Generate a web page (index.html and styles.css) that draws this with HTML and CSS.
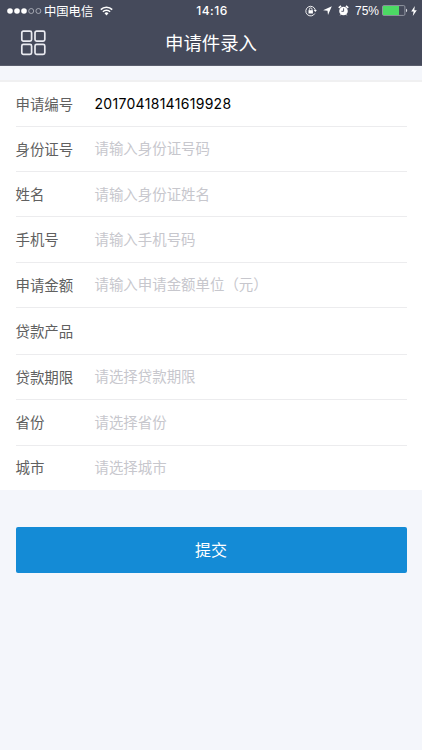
FILE: index.html
```
<!DOCTYPE html>
<html lang="zh-CN">
<head>
<meta charset="utf-8">
<title>申请件录入</title>
<link rel="stylesheet" href="styles.css">
</head>
<body>
<header class="header">
  <div class="status">
    <div class="status-left">
      <svg class="signal" width="36" height="8" viewBox="0 0 36 8"><g fill="#fff"><circle cx="3" cy="4" r="2.8"/><circle cx="10" cy="4" r="2.8"/><circle cx="17" cy="4" r="2.8"/></g><g fill="none" stroke="#c9cbd2" stroke-width=".7"><circle cx="24.2" cy="4" r="2.5"/><circle cx="31.4" cy="4" r="2.5"/></g></svg>
      <span class="carrier">中国电信</span>
      <svg class="wifi" width="13" height="10" viewBox="0 0 13 10"><g fill="none" stroke="#fff" stroke-width="1.6"><path d="M.8 3.6a8 8 0 0 1 11.4 0"/><path d="M2.9 5.8a5.1 5.1 0 0 1 7.2 0"/></g><path fill="#fff" d="M6.5 9.4 4.5 7.3a2.8 2.8 0 0 1 4 0z"/></svg>
    </div>
    <time class="clock">14:16</time>
    <div class="status-right">
      <svg width="12" height="12" viewBox="0 0 12 12"><path d="M9.8 8.5A4.8 4.8 0 1 1 10.3 5" fill="none" stroke="#fff" stroke-width=".9"/><path d="M8.7 5.1h3.1l-1.5 2z" fill="#fff"/><rect x="3.5" y="5.2" width="4.4" height="3.3" fill="#fff"/><path d="M4.4 5.5V4.2a1.3 1.3 0 0 1 2.6 0v1.3" fill="none" stroke="#fff" stroke-width=".8"/></svg>
      <svg class="locate" width="9" height="9" viewBox="0 0 9 9"><path d="M8.8.2 5 8.9 4.5 4.7.1 4.2z" fill="#fff"/></svg>
      <svg class="alarm" width="11" height="11" viewBox="0 0 11 11"><circle cx="5.5" cy="6" r="4.3" fill="#fff"/><path d="M.8 2.9 3 .9M10.2 2.9 8 .9" stroke="#fff" stroke-width="1.6"/><path d="m2.3 10.3 1-1.2M8.7 10.3l-1-1.2" stroke="#fff"/><path d="M5.6 3.3v3H3.4" fill="none" stroke="#454a5b" stroke-width=".9"/></svg>
      <span class="percent">75%</span>
      <svg class="battery" width="26" height="11" viewBox="0 0 26 11"><rect x=".5" y=".6" width="22.4" height="9.8" rx="1.2" fill="none" stroke="#a5a8b3" stroke-width=".8"/><rect x="1" y="1" width="16" height="9" fill="#4cd964"/><path d="M24 3.8c1.6.3 1.6 3.1 0 3.4z" fill="#d9dbe0"/></svg>
      <svg class="bolt" width="6" height="10" viewBox="0 0 6 10"><path d="M3.8 0 .2 5.6h2.4L1.8 10l4-5.8H3.3z" fill="#fff"/></svg>
    </div>
  </div>
  <div class="navbar">
    <svg class="menu" width="26" height="26" viewBox="0 0 26 26"><g fill="none" stroke="#e9eaf0" stroke-width="1.7"><rect x="1.8" y="1.2" width="9.8" height="10" rx="1.6"/><rect x="15" y="1.2" width="9.8" height="10" rx="1.6"/><rect x="1.8" y="14.4" width="9.8" height="10" rx="1.6"/><rect x="15" y="14.4" width="9.8" height="10" rx="1.6"/></g></svg>
    <h1 class="title">申请件录入</h1>
  </div>
</header>
<main>
  <div class="form">
    <div class="row"><span class="label">申请编号</span><span class="value">20170418141619928</span></div>
    <div class="row"><span class="label">身份证号</span><span class="hint">请输入身份证号码</span></div>
    <div class="row row-name"><span class="label">姓名</span><span class="hint">请输入身份证姓名</span></div>
    <div class="row row-mid"><span class="label">手机号</span><span class="hint">请输入手机号码</span></div>
    <div class="row"><span class="label">申请金额</span><span class="hint">请输入申请金额单位（元）</span></div>
    <div class="row row-tall"><span class="label">贷款产品</span></div>
    <div class="row"><span class="label">贷款期限</span><span class="hint">请选择贷款期限</span></div>
    <div class="row row-mid"><span class="label">省份</span><span class="hint">请选择省份</span></div>
    <div class="row row-last"><span class="label">城市</span><span class="hint">请选择城市</span></div>
  </div>
  <button class="submit" type="button">提交</button>
</main>
</body>
</html>
```
FILE: styles.css
```
* { box-sizing: border-box; }
body {
  margin: 0;
  min-height: 750px;
  background: #f4f6fb;
  font-family: Inter, "Noto Sans CJK SC", sans-serif;
}
svg { display: block; flex: none; }
.header {
  height: 66px;
  background: #454a5b;
  border-bottom: 1px solid #5a5e6d;
  color: #fff;
}
.status {
  display: grid;
  grid-template-columns: 1fr auto 1fr;
  height: 21px;
  align-items: center;
  padding: 0 5px 0 7px;
}
.status-left, .status-right { display: flex; align-items: center; height: 21px; }
.status-right { justify-content: flex-end; }
.carrier { margin-left: 1px; font-size: 12.3px; line-height: 20px; padding-top: 2px; }
.wifi { margin-left: 7px; }
.clock { font-size: 12px; font-weight: 500; line-height: 21px; letter-spacing: .5px; }
.locate { margin-left: 6px; }
.alarm { margin-left: 6px; }
.percent { margin-left: 6px; padding-top: 1px; font-family: "Liberation Sans", sans-serif; font-size: 12px; line-height: 21px; }
.battery { margin-left: 3px; }
.bolt { margin-left: 3px; }
.navbar {
  display: grid;
  grid-template-columns: 60px 1fr 60px;
  align-items: center;
  height: 44px;
}
.menu { margin-left: 20px; }
.title {
  margin: 0;
  font-size: 18.4px;
  font-weight: 400;
  line-height: 44px;
  text-align: center;
}
.form {
  margin-top: 14px;
  padding-left: 15.5px;
  padding-right: 15.5px;
  background: #fff;
  border-top: 2px solid #f0f0f1;
}
.row {
  display: flex;
  align-items: center;
  height: 45px;
  padding-top: 1px;
  border-bottom: 1px solid #ececee;
  font-size: 14.45px;
  line-height: 20px;
}
.row-name { padding-top: 2px; }
.row-mid { height: 46px; padding-top: 1px; }
.row-tall { height: 47px; padding-top: 2px; }
.row-last { height: 44px; padding-top: 0; border-bottom: 0; }
.label { width: 79px; color: #606060; }
.value { padding-bottom: 2px; color: #000; font-size: 14px; letter-spacing: .3px; }
.hint { padding-bottom: 1px; color: #c7c7cd; }
.row-last .hint { padding-bottom: 0; }
.submit {
  display: block;
  width: 391px;
  height: 46px;
  margin: 37px 0 0 15.5px;
  padding: 0 0 1px;
  border: 0;
  border-radius: 2px;
  background: #148bd6;
  color: #fff;
  font: 16px/45px "Noto Sans CJK SC", sans-serif;
}
```
